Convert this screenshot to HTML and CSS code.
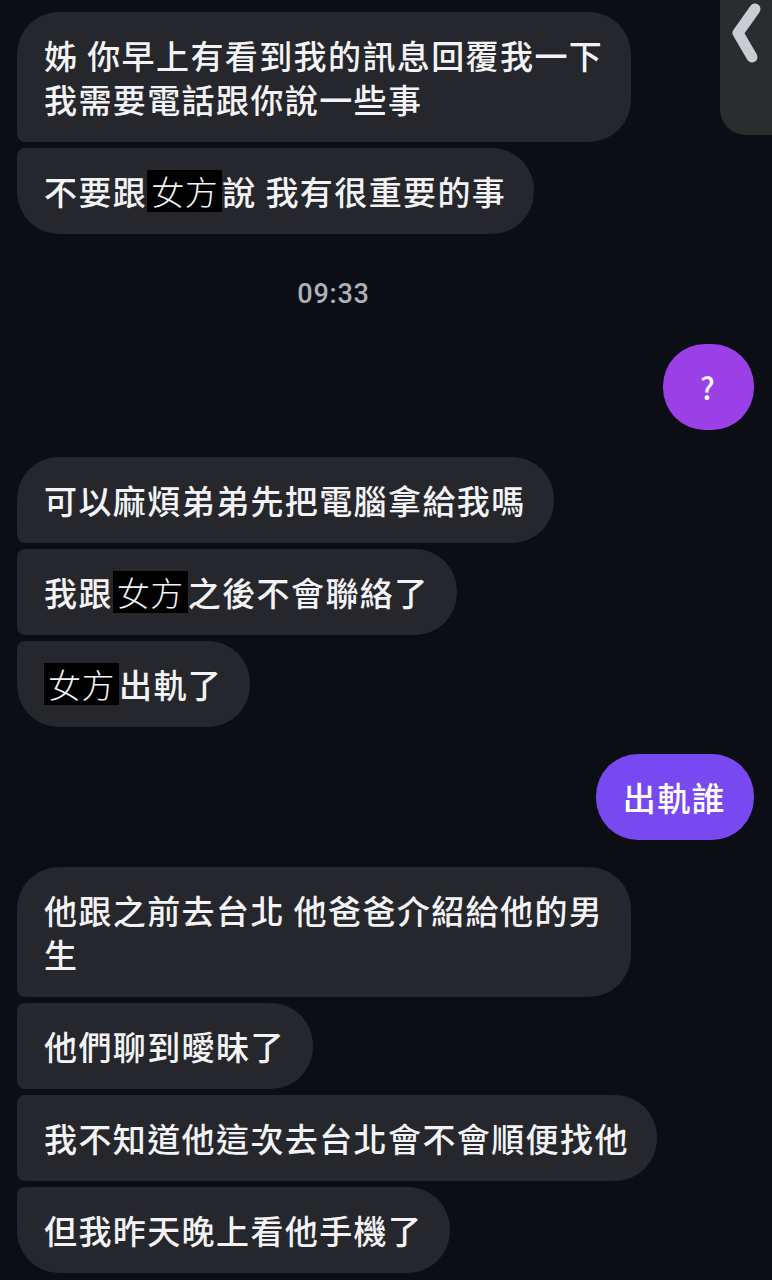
FILE: index.html
```html
<!DOCTYPE html>
<html lang="zh-Hant">
<head>
  <meta charset="UTF-8">
  <meta name="viewport" content="width=device-width, initial-scale=1.0">
  <title>Chat</title>
  <link rel="stylesheet" href="styles.css">
</head>
<body>
  <div class="chat">
    <div class="side-tab">
      <svg class="chevron" width="52" height="70" viewBox="0 0 52 70">
        <path d="M35 9 L18 33 L32 57" fill="none" stroke="#c9ccd3" stroke-width="11" stroke-linecap="round" stroke-linejoin="round"/>
      </svg>
    </div>

    <div class="group in">
      <div class="bubble first">姊 你早上有看到我的訊息回覆我一下<br>我需要電話跟你說一些事</div>
      <div class="bubble last">不要跟<span class="redact">女方</span>說 我有很重要的事</div>
    </div>

    <div class="time">09:33</div>

    <div class="group out gap-time">
      <div class="bubble single round">?</div>
    </div>

    <div class="group in gap">
      <div class="bubble first">可以麻煩弟弟先把電腦拿給我嗎</div>
      <div class="bubble mid">我跟<span class="redact">女方</span>之後不會聯絡了</div>
      <div class="bubble last"><span class="redact">女方</span>出軌了</div>
    </div>

    <div class="group out gap">
      <div class="bubble single violet">出軌誰</div>
    </div>

    <div class="group in gap">
      <div class="bubble first">他跟之前去台北 他爸爸介紹給他的男<br>生</div>
      <div class="bubble mid">他們聊到曖昧了</div>
      <div class="bubble mid">我不知道他這次去台北會不會順便找他</div>
      <div class="bubble last">但我昨天晚上看他手機了</div>
    </div>
  </div>
</body>
</html>
```

FILE: styles.css
```css
body {
  margin: 0;
  background-color: #0b0e15;
  font-family: "Noto Sans CJK TC", "Noto Sans", sans-serif;
  color: #f3f3f5;
}
.chat {
  position: relative;
  display: flex;
  flex-direction: column;
  padding: 12px 18px 0 17px;
  min-height: 1268px;
}
.side-tab {
  position: absolute;
  top: 0;
  right: 0;
  width: 52px;
  height: 135px;
  background-color: #2a2c2e;
  border-bottom-left-radius: 26px;
}
.chevron {
  display: block;
}
.group {
  display: flex;
  flex-direction: column;
  gap: 6px;
}
.group.in {
  align-items: flex-start;
}
.group.out {
  align-items: flex-end;
}
.gap {
  margin-top: 27px;
}
.gap-time {
  margin-top: 36px;
}
.bubble {
  font-size: 33px;
  font-weight: 500;
  line-height: 44px;
  letter-spacing: 1.4px;
  padding: 21px 28px 21px 27px;
  background-color: #25272c;
  border-radius: 42px;
}
.group.in .first {
  border-bottom-left-radius: 8px;
}
.group.in .mid {
  border-top-left-radius: 8px;
  border-bottom-left-radius: 8px;
}
.group.in .last {
  border-top-left-radius: 8px;
}
.bubble.round {
  min-width: 36px;
  text-align: center;
  font-size: 30px;
  background-color: #9a40e6;
  color: #fff;
}
.bubble.violet {
  background-color: #7848f0;
  color: #fff;
}
.redact {
  display: inline-block;
  background-color: #000;
  font-weight: 300;
  letter-spacing: 0.5px;
  padding: 0 4px;
  line-height: 42px;
}
.time {
  margin-top: 46px;
  padding-right: 104px;
  text-align: center;
  font-family: Roboto, "Noto Sans", sans-serif;
  font-size: 27px;
  font-weight: 500;
  letter-spacing: 0.8px;
  line-height: 28px;
  color: #adb1b8;
}
```
